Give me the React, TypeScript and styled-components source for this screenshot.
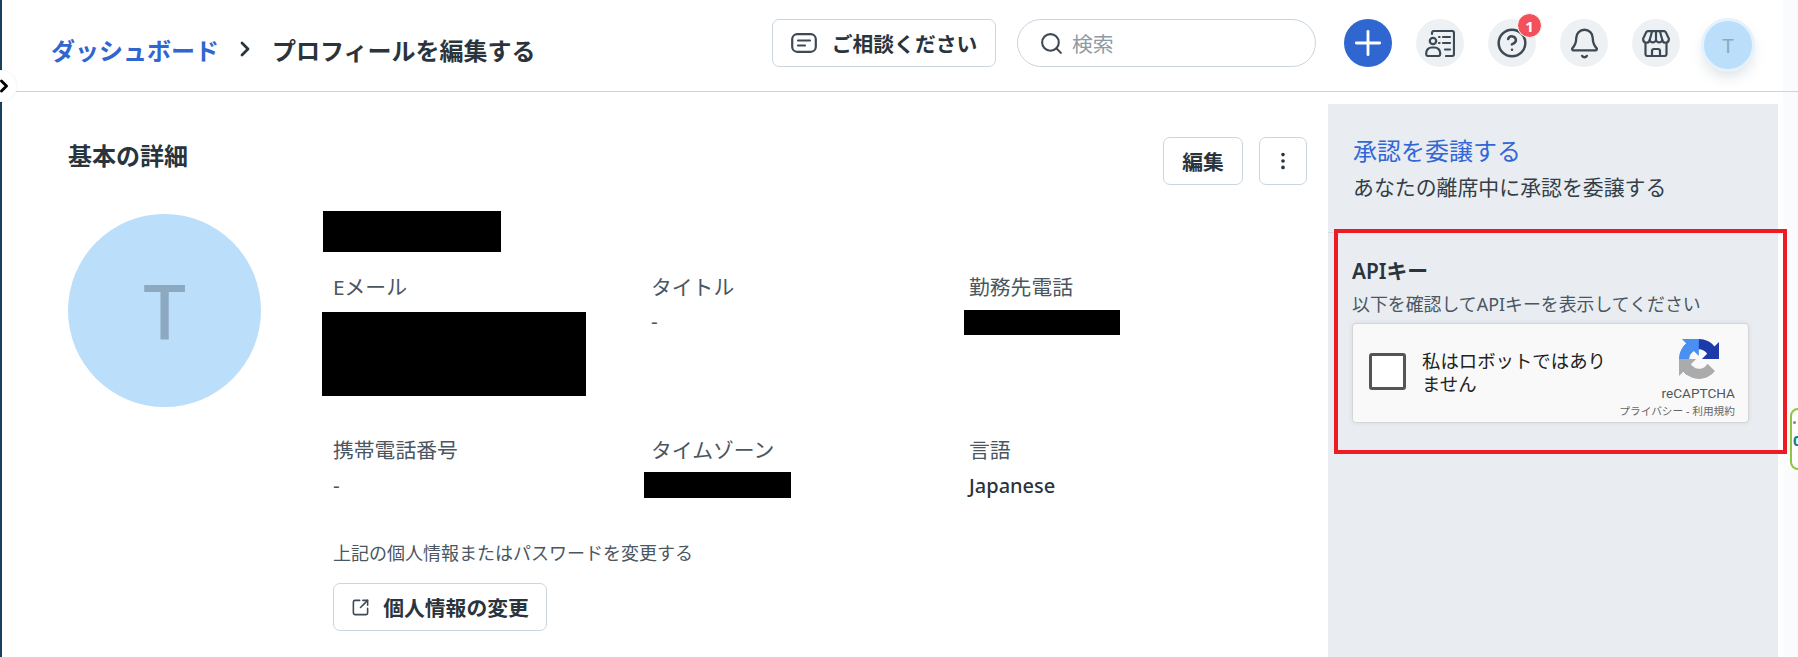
import styled, { createGlobalStyle } from "styled-components";
import { Bell, CircleHelp, EllipsisVertical, Plus, Search, SquareArrowOutUpRight, ChevronRight } from "lucide-react";

const GlobalStyle = createGlobalStyle`
  html, body {
    margin: 0;
    padding: 0;
    height: 100%;
    overflow: hidden;
    background: #ffffff;
    font-family: "Noto Sans", "Noto Sans CJK JP", sans-serif;
    color: #2a343d;
  }
  * { box-sizing: border-box; }
`;

const Page = styled.div`
  display: flex;
  height: 657px;
  position: relative;
  overflow: hidden;
`;

const Rail = styled.div`
  width: 2px;
  flex: none;
  background: #17405f;
`;

const RailToggle = styled.div`
  position: absolute;
  left: -16px;
  top: 70px;
  width: 32px;
  height: 32px;
  border-radius: 50%;
  background: #ffffff;
  box-shadow: 0 0 3px rgba(0, 0, 0, 0.08);
  display: flex;
  align-items: center;
  justify-content: flex-end;
  color: #000000;
  z-index: 2;
  svg { margin-right: 2px; }
`;

const Main = styled.div`
  flex: 1;
  display: flex;
  flex-direction: column;
  min-width: 0;
`;

const Header = styled.header`
  height: 92px;
  flex: none;
  display: flex;
  align-items: flex-start;
  padding-top: 19px;
  border-bottom: 1px solid #cbd5de;
  margin-left: 14px;
  padding-left: 35px;
`;

const Breadcrumb = styled.nav`
  display: flex;
  align-items: center;
  height: 62px;
  margin-top: -1px;
  font-size: 24px;
  font-weight: 600;
  flex: 1;
  svg { margin: 0 15px 0 14px; color: #2a343d; }
`;

const Crumb = styled.a`
  color: #2f66cf;
`;

const CurrentCrumb = styled.span`
  color: #2a343d;
`;

const OutlineButton = styled.button<{ $width?: number }>`
  height: 48px;
  width: ${(p) => (p.$width ? `${p.$width}px` : "auto")};
  display: inline-flex;
  align-items: center;
  justify-content: center;
  background: #ffffff;
  border: 1px solid #cbd5de;
  border-radius: 7px;
  font-family: inherit;
  font-size: 20.8px;
  font-weight: 700;
  color: #2a343d;
  padding: 0;
  flex: none;
`;

const ButtonIcon = styled.span<{ $gap: number }>`
  display: inline-flex;
  margin-right: ${(p) => p.$gap}px;
  color: #3d4a55;
`;

const SearchBox = styled.div`
  width: 299px;
  height: 48px;
  margin-left: 21px;
  border: 1px solid #cbd5de;
  border-radius: 24px;
  display: flex;
  align-items: center;
  padding-left: 21px;
  font-size: 20.8px;
  color: #8e9aa6;
  svg { color: #3d4a55; margin-right: 8px; }
`;

const IconRow = styled.div`
  display: flex;
  gap: 24px;
  margin-left: 28px;
  margin-right: 31px;
`;

const RoundButton = styled.div<{ $primary?: boolean }>`
  position: relative;
  width: 48px;
  height: 48px;
  border-radius: 50%;
  display: flex;
  align-items: center;
  justify-content: center;
  background: ${(p) => (p.$primary ? "#2f66cf" : "#eef1f4")};
  color: ${(p) => (p.$primary ? "#ffffff" : "#3d4a55")};
`;

const Badge = styled.span`
  position: absolute;
  top: -6px;
  right: -6px;
  width: 25px;
  height: 25px;
  border-radius: 50%;
  background: #f4505a;
  border: 1.5px solid #ffffff;
  color: #ffffff;
  font-size: 15px;
  font-weight: 700;
  display: flex;
  align-items: center;
  justify-content: center;
`;

const UserAvatar = styled.div`
  width: 48px;
  height: 48px;
  margin-top: 2px;
  border-radius: 50%;
  background: #bbdefb;
  box-shadow: 0 0 0 3px #e3f2fd, 0 7px 14px rgba(70, 90, 110, 0.2);
  color: #8da9c0;
  font-size: 20.8px;
  display: flex;
  align-items: center;
  justify-content: center;
`;

const Gutter = styled.div`
  width: 15px;
  flex: none;
  align-self: stretch;
  background: #fafbfc;
`;

const HeaderGutter = styled(Gutter)`
  margin-top: -19px;
`;

const Body = styled.div`
  flex: 1;
  display: flex;
  min-height: 0;
`;

const Content = styled.section`
  flex: 1;
  padding: 45px 21px 0 66px;
  min-width: 0;
`;

const SectionHead = styled.div`
  display: flex;
  align-items: flex-start;
  gap: 16px;
`;

const SectionTitle = styled.h2`
  margin: 2px auto 0 0;
  font-size: 24px;
  line-height: 34px;
  font-weight: 600;
  color: #2a343d;
`;

const Profile = styled.div`
  display: flex;
  margin-top: 26px;
`;

const BigAvatar = styled.div`
  width: 193px;
  height: 193px;
  flex: none;
  margin-top: 3px;
  margin-right: 61px;
  border-radius: 50%;
  background: #bbdefb;
  color: #8da9c0;
  font-size: 76px;
  font-weight: 500;
  display: flex;
  align-items: center;
  justify-content: center;
`;

const Details = styled.div`
  flex: 1;
`;

const Redacted = styled.div<{ $w: number; $h: number; $shift?: number; $top?: number }>`
  width: ${(p) => p.$w}px;
  height: ${(p) => p.$h}px;
  margin-left: ${(p) => p.$shift ?? 0}px;
  margin-top: ${(p) => p.$top ?? 0}px;
  background: #000000;
`;

const FieldGrid = styled.div`
  display: grid;
  grid-template-columns: repeat(3, 318px);
  row-gap: 41px;
  margin-top: 22px;
  padding-left: 11px;
`;

const Field = styled.div``;

const FieldLabel = styled.div`
  font-size: 20.8px;
  line-height: 27px;
  color: #4a5661;
`;

const FieldValue = styled.div<{ $strong?: boolean; $top?: number }>`
  margin-top: ${(p) => p.$top ?? 8}px;
  font-size: ${(p) => (p.$strong ? 20 : 20.8)}px;
  line-height: 27px;
  font-weight: ${(p) => (p.$strong ? 500 : 400)};
  color: ${(p) => (p.$strong ? "#2a343d" : "#4a5661")};
`;

const ChangeNote = styled.p`
  margin: 42px 0 18px 11px;
  font-size: 18px;
  line-height: 24px;
  color: #4a5661;
`;

const ChangeButton = styled(OutlineButton)`
  margin-left: 11px;
`;

const Aside = styled.aside`
  width: 450px;
  flex: none;
  margin-top: 12px;
  background: #e9edf1;
  position: relative;
`;

const AsideSpacer = styled.div`
  width: 5px;
  flex: none;
`;

const DelegateBlock = styled.div`
  height: 129px;
  padding: 32px 0 0 25px;
  border-bottom: 1px solid #d3dae1;
`;

const DelegateLink = styled.a`
  display: block;
  font-size: 24px;
  line-height: 30px;
  color: #3367d6;
`;

const DelegateText = styled.div`
  margin-top: 8px;
  font-size: 20.9px;
  line-height: 27px;
  color: #333e48;
`;

const ApiBlock = styled.div`
  padding: 24px 0 0 24px;
`;

const ApiTitle = styled.h3`
  margin: 0;
  font-size: 20.8px;
  line-height: 28px;
  font-weight: 600;
  color: #2a343d;
`;

const ApiHint = styled.div`
  margin-top: 7px;
  font-size: 17.9px;
  line-height: 24px;
  color: #4a5661;
  white-space: nowrap;
`;

const Captcha = styled.div`
  width: 397px;
  height: 100px;
  margin-top: 7px;
  display: flex;
  background: #f9f9f9;
  border: 1px solid #d6d6d6;
  border-radius: 4px;
  box-shadow: 0 0 5px rgba(0, 0, 0, 0.08);
  position: relative;
`;

const CaptchaCheck = styled.div`
  width: 37px;
  height: 37px;
  flex: none;
  margin: 29px 16px 0 16px;
  background: #ffffff;
  border: 3px solid #555555;
  border-radius: 3px;
`;

const CaptchaLabel = styled.div`
  width: 190px;
  margin-top: 25px;
  font-size: 18.4px;
  line-height: 23px;
  color: #222222;
`;

const CaptchaBrand = styled.div`
  position: absolute;
  right: 13px;
  top: 15px;
  display: flex;
  flex-direction: column;
  align-items: flex-end;
  color: #555555;
`;

const CaptchaLogo = styled.svg`
  width: 40px;
  height: 40px;
  margin-right: 16px;
`;

const CaptchaName = styled.div`
  margin-top: 5px;
  font-family: Roboto, sans-serif;
  font-size: 13.6px;
  line-height: 18px;
`;

const CaptchaLinks = styled.div`
  margin-top: 2px;
  font-size: 10.7px;
  line-height: 15px;
  color: #666666;
  white-space: nowrap;
`;

const RedFrame = styled.div`
  position: absolute;
  left: 6px;
  top: 125px;
  width: 453px;
  height: 225px;
  border: 4px solid #ed1c24;
`;

const GreenTab = styled.div`
  position: absolute;
  left: 1790px;
  top: 408px;
  width: 30px;
  height: 62px;
  border: 2.5px solid #8dc63f;
  border-radius: 8px;
  background: #ffffff;
  overflow: hidden;
  padding: 11px 0 0 1px;
`;

const GreenTabDot = styled.div`
  width: 3px;
  height: 3px;
  border-radius: 50%;
  background: #888888;
`;

const GreenTabNum = styled.div`
  margin-top: 7px;
  font-size: 15px;
  line-height: 18px;
  font-weight: 700;
  color: #0f7f86;
`;

const ChatIcon = () => (
  <svg width="26" height="20" viewBox="0 0 26 20" fill="none" stroke="currentColor" strokeWidth="2.2" strokeLinecap="round">
    <rect x="1.2" y="1.2" width="23.6" height="17.6" rx="5" />
    <path d="M7 7.5h12M7 12.5h7" />
  </svg>
);

const ContactsIcon = () => (
  <svg width="30" height="27" viewBox="0 0 30 27" fill="none" stroke="currentColor" strokeWidth="2.2" strokeLinecap="round" strokeLinejoin="round">
    <path d="M7 4V3a2 2 0 0 1 2-2h18a2 2 0 0 1 2 2v21a2 2 0 0 1-2 2h-6" />
    <circle cx="8" cy="11" r="3.2" />
    <path d="M1.2 23a5.5 5.5 0 0 1 5.5-5.5h3a5.5 5.5 0 0 1 5.5 5.5v1a2 2 0 0 1-2 2H3.2a2 2 0 0 1-2-2z" />
    <path d="M14 7h.6M18 7h7M14 13h.6M18 13h7M20 19.5h5" />
  </svg>
);

const StoreIcon = () => (
  <svg width="28" height="27" viewBox="0 0 28 27" fill="none" stroke="currentColor" strokeWidth="2.2" strokeLinecap="round" strokeLinejoin="round">
    <path d="M6 1.2h16a2 2 0 0 1 1.8 1.1l3 6.2V10a3.3 3.3 0 0 1-6.5 0 3.3 3.3 0 0 1-6.3 0 3.3 3.3 0 0 1-6.3 0 3.3 3.3 0 0 1-6.5 0V8.5l3-6.2A2 2 0 0 1 6 1.2z" />
    <path d="M10 1.5L7.7 10M18 1.5l2.3 8.5M14 1.5V10" />
    <path d="M3.5 14v10a2 2 0 0 0 2 2h17a2 2 0 0 0 2-2V14" />
    <path d="M10 26v-5a2 2 0 0 1 2-2h4a2 2 0 0 1 2 2v5" />
  </svg>
);

const RecaptchaLogo = () => (
  <CaptchaLogo viewBox="0 0 64 64">
    <path d="M64 31.955l-.033-1.37V4.687l-7.16 7.16C50.948 4.674 42.033.093 32.05.093c-10.4 0-19.622 4.96-25.458 12.64l11.736 11.86a15.55 15.55 0 0 1 4.754-5.334c2.05-1.6 4.952-2.906 8.968-2.906.485 0 .86.057 1.135.163 4.976.393 9.288 3.14 11.828 7.124l-8.307 8.307c10.522-.04 22.4-.066 27.295.005" fill="#1c3aa9" />
    <path d="M31.862.094l-1.37.033H4.594l7.16 7.16C4.58 13.147 0 22.06 0 32.046c0 10.4 4.96 19.622 12.64 25.458L24.5 45.768a15.55 15.55 0 0 1-5.334-4.754c-1.6-2.05-2.906-4.952-2.906-8.968 0-.485.057-.86.163-1.135.393-4.976 3.14-9.288 7.124-11.828l8.307 8.307C31.814 16.868 31.79 4.99 31.862.094" fill="#4a90f2" />
    <path d="M.001 32.045l.033 1.37v25.898l7.16-7.16c5.86 7.173 14.774 11.754 24.76 11.754 10.4 0 19.622-4.96 25.458-12.64L45.677 39.41a15.55 15.55 0 0 1-4.754 5.334c-2.05 1.6-4.952 2.906-8.968 2.906-.485 0-.86-.057-1.135-.163-4.976-.393-9.288-3.14-11.828-7.124l8.307-8.307c-10.522.04-22.4.066-27.295-.005" fill="#ababab" />
  </CaptchaLogo>
);

const App = () => {
  return (
    <Page>
      <GlobalStyle />
      <Rail />
      <RailToggle>
        <ChevronRight size={20} strokeWidth={3.4} />
      </RailToggle>
      <Main>
        <Header>
          <Breadcrumb>
            <Crumb>ダッシュボード</Crumb>
            <ChevronRight size={24} strokeWidth={2.8} />
            <CurrentCrumb>プロフィールを編集する</CurrentCrumb>
          </Breadcrumb>
          <OutlineButton $width={224}>
            <ButtonIcon $gap={15}>
              <ChatIcon />
            </ButtonIcon>
            ご相談ください
          </OutlineButton>
          <SearchBox>
            <Search size={25} strokeWidth={2} />
            検索
          </SearchBox>
          <IconRow>
            <RoundButton $primary>
              <Plus size={40} strokeWidth={1.7} />
            </RoundButton>
            <RoundButton>
              <ContactsIcon />
            </RoundButton>
            <RoundButton>
              <CircleHelp size={32} strokeWidth={1.9} />
              <Badge>1</Badge>
            </RoundButton>
            <RoundButton>
              <Bell size={33} strokeWidth={1.7} />
            </RoundButton>
            <RoundButton>
              <StoreIcon />
            </RoundButton>
            <UserAvatar>T</UserAvatar>
          </IconRow>
          <HeaderGutter />
        </Header>
        <Body>
          <Content>
            <SectionHead>
              <SectionTitle>基本の詳細</SectionTitle>
              <OutlineButton $width={80}>編集</OutlineButton>
              <OutlineButton $width={48}>
                <EllipsisVertical size={22} strokeWidth={2} />
              </OutlineButton>
            </SectionHead>
            <Profile>
              <BigAvatar>T</BigAvatar>
              <Details>
                <Redacted $w={178} $h={41} $shift={1} />
                <FieldGrid>
                  <Field>
                    <FieldLabel>Eメール</FieldLabel>
                    <Redacted $w={264} $h={84} $shift={-11} $top={11} />
                  </Field>
                  <Field>
                    <FieldLabel>タイトル</FieldLabel>
                    <FieldValue $top={7}>-</FieldValue>
                  </Field>
                  <Field>
                    <FieldLabel>勤務先電話</FieldLabel>
                    <Redacted $w={156} $h={25} $shift={-5} $top={9} />
                  </Field>
                  <Field>
                    <FieldLabel>携帯電話番号</FieldLabel>
                    <FieldValue>-</FieldValue>
                  </Field>
                  <Field>
                    <FieldLabel>タイムゾーン</FieldLabel>
                    <Redacted $w={147} $h={26} $shift={-7} $top={8} />
                  </Field>
                  <Field>
                    <FieldLabel>言語</FieldLabel>
                    <FieldValue $strong>Japanese</FieldValue>
                  </Field>
                </FieldGrid>
                <ChangeNote>上記の個人情報またはパスワードを変更する</ChangeNote>
                <ChangeButton $width={214}>
                  <ButtonIcon $gap={13}>
                    <SquareArrowOutUpRight size={19} strokeWidth={2} />
                  </ButtonIcon>
                  個人情報の変更
                </ChangeButton>
              </Details>
            </Profile>
          </Content>
          <Aside>
            <DelegateBlock>
              <DelegateLink>承認を委譲する</DelegateLink>
              <DelegateText>あなたの離席中に承認を委譲する</DelegateText>
            </DelegateBlock>
            <ApiBlock>
              <ApiTitle>APIキー</ApiTitle>
              <ApiHint>以下を確認してAPIキーを表示してください</ApiHint>
              <Captcha>
                <CaptchaCheck />
                <CaptchaLabel>私はロボットではありません</CaptchaLabel>
                <CaptchaBrand>
                  <RecaptchaLogo />
                  <CaptchaName>reCAPTCHA</CaptchaName>
                  <CaptchaLinks>プライバシー - 利用規約</CaptchaLinks>
                </CaptchaBrand>
              </Captcha>
            </ApiBlock>
            <RedFrame />
          </Aside>
          <AsideSpacer />
          <Gutter />
        </Body>
      </Main>
      <GreenTab>
        <GreenTabDot />
        <GreenTabNum>0</GreenTabNum>
      </GreenTab>
    </Page>
  );
};

export default App;
